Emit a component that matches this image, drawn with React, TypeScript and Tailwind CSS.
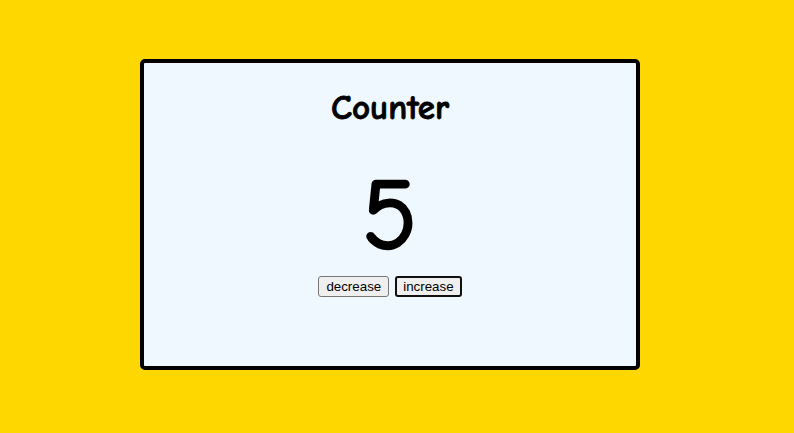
import React, { useState } from 'react';

const comic = { fontFamily: '"Comic Sans MS", "Comic Neue", "Liberation Sans", sans-serif' };

function Counter() {
    const [count, setCount] = useState(5);

    return (
        <div className="ml-[140px] w-[500px] h-[311px] bg-[#f0f8ff] border-4 border-black rounded-[5px] flex flex-col items-center pt-[26px]">
            <h1 className="text-[35px] leading-[38px] font-bold text-black [-webkit-text-stroke:0.8px_black]" style={comic}>Counter</h1>
            <div className="mt-[38px] text-[102px] leading-[102px] text-black [-webkit-text-stroke:2.5px_black]" style={comic}>{count}</div>
            <div className="mt-[9px] flex gap-[6px] font-['Liberation_Sans',Arial,sans-serif] text-[13.33px] leading-[15px] text-black">
                <button
                    className="bg-[#efefef] border border-[#767676] rounded-[3px] px-[7px] py-[2px]"
                    onClick={() => setCount(count - 1)}
                >
                    decrease
                </button>
                <button
                    className="bg-[#efefef] border-2 border-[#101010] rounded-[3px] px-[6px] py-[1px]"
                    onClick={() => setCount(count + 1)}
                >
                    increase
                </button>
            </div>
        </div>
    );
}

export default function App() {
    return (
        <div className="w-[794px] h-[433px] bg-[#ffd700] pt-[59px]">
            <Counter />
        </div>
    );
}
